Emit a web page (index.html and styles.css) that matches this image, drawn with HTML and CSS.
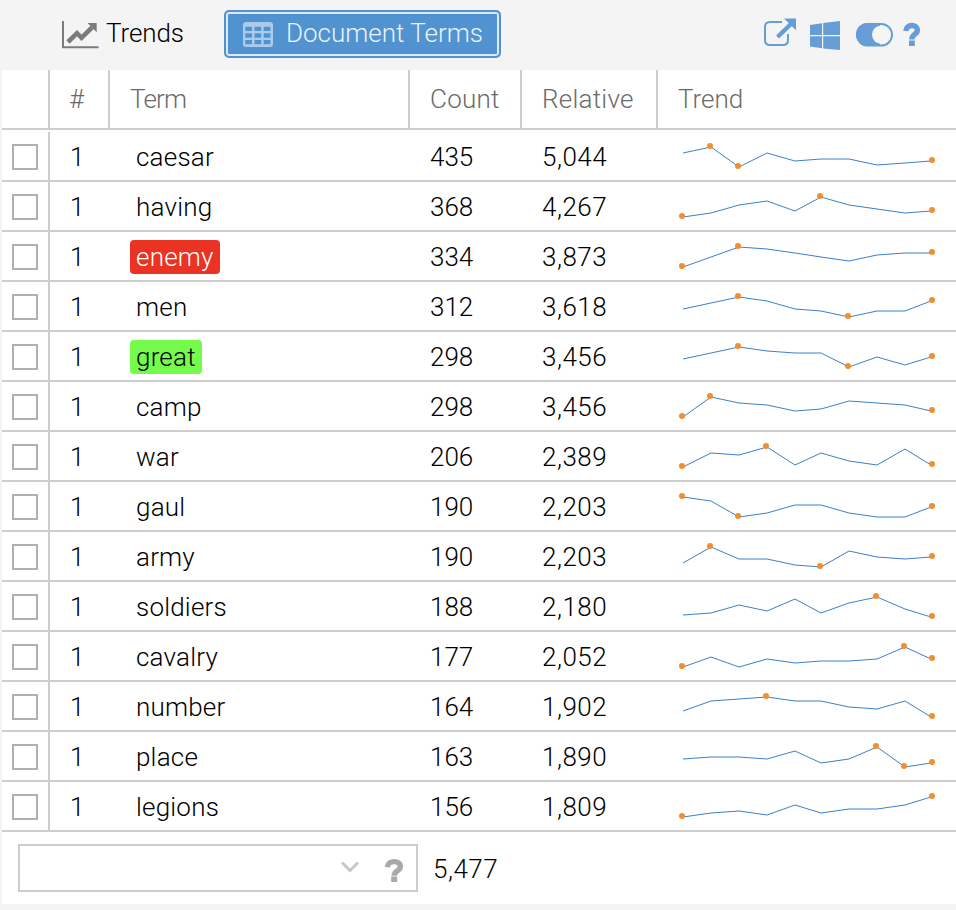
FILE: index.html
```html
<!DOCTYPE html>
<html lang="en">
<head>
<meta charset="utf-8">
<title>Document Terms</title>
<link rel="stylesheet" href="styles.css">
</head>
<body>
<div class="panel">
  <header class="toolbar">
    <div class="tab">
      <svg class="tab-icon" width="38" height="30" viewBox="61 20 38 30">
        <path d="M63 21V47.2H98.500" fill="none" stroke="#7b7b7b" stroke-width="2"/>
        <path d="M68 42L77 33.200L81.500 37.800L92 27.500" fill="none" stroke="#7b7b7b" stroke-width="4.600"/>
        <path d="M87.500 23H96.700V32.200Z" fill="#7b7b7b"/>
      </svg>
      <span class="tab-label trends">Trends</span>
    </div>
    <div class="tab active">
      <svg class="table-icon" width="30" height="25" viewBox="0 0 30 25">
        <rect width="30" height="25" rx="3" fill="#abcbe9"/>
        <g fill="#5192d1">
          <rect x="2.300" y="4.800" width="6.700" height="4.200"/><rect x="11.500" y="4.800" width="6.700" height="4.200"/><rect x="20.700" y="4.800" width="6.700" height="4.200"/>
          <rect x="2.300" y="11.300" width="6.700" height="4.400"/><rect x="11.500" y="11.300" width="6.700" height="4.400"/><rect x="20.700" y="11.300" width="6.700" height="4.400"/>
          <rect x="2.300" y="18" width="6.700" height="4.200"/><rect x="11.500" y="18" width="6.700" height="4.200"/><rect x="20.700" y="18" width="6.700" height="4.200"/>
        </g>
      </svg>
      <span class="tab-label terms">Document Terms</span>
    </div>
    <svg class="tools" width="160" height="36" viewBox="762 16 160 36">
      <g fill="none" stroke="#669dd6">
        <path d="M782 22H770Q765 22 765 27V40Q765 45 770 45H783Q788 45 788 40V34" stroke-width="2"/>
        <path d="M777.500 37L792 23" stroke-width="4.400"/>
        <path d="M905.800 31C906.500 23.500 917.400 24 917.400 30.200C917.400 34.500 911.800 34 911.800 39.500" stroke-width="5.400"/>
        <rect x="857" y="24" width="35" height="21.600" rx="10.800" stroke-width="2"/>
      </g>
      <g fill="#669dd6">
        <path d="M784 18.500H796V30.200Z"/>
        <path d="M810 25L822 23.300V35H810ZM823.200 23.100L840 21V35H823.200ZM810 36.300H822V48.300L810 46.600ZM823.200 36.300H840V50L823.200 48.500Z"/>
        <path d="M867.500 23A11.500 11.500 0 0 0 867.500 46H880V23Z"/>
        <rect x="909" y="40.500" width="5.800" height="5.500"/>
      </g>
      <circle cx="881.300" cy="34.700" r="9.300" fill="#f5f5f5"/>
    </svg>
  </header>
  <div class="grid-head">
    <div></div><div class="num">#</div><div class="name">Term</div><div class="wide">Count</div><div class="wide">Relative</div><div>Trend</div>
  </div>
  <div class="grid-body" id="rows"></div>
  <footer class="footer">
    <div class="search">
      <svg width="60" height="30" viewBox="340 854 60 30" class="search-icons">
        <path d="M342 862.500L350 870.500L358 862.500" fill="none" stroke="#c6c6c6" stroke-width="3"/>
        <path d="M387.300 867.200C388 859.700 400.400 860 400.400 866.500C400.400 871 394.200 870.500 394.200 875.700" fill="none" stroke="#aaa" stroke-width="5.400"/>
        <rect x="391.200" y="876.500" width="6" height="5.500" fill="#aaa"/>
      </svg>
    </div>
    <span class="total">5,477</span>
  </footer>
</div>
<script src="rows.js"></script>
</body>
</html>
```
FILE: styles.css
```css
* { box-sizing: border-box; }
body {
  margin: 0;
  background: #f4f4f4;
  font-family: Roboto, "Liberation Sans", sans-serif;
  font-weight: 300;
  font-size: 26px;
  line-height: 30px;
  color: #000;
}
.panel { height: 910px; padding-left: 2px; overflow: hidden; }
.toolbar { height: 70px; display: flex; align-items: flex-start; padding-top: 10px; }
.tab { height: 48px; display: flex; align-items: center; width: 163px; margin-left: 59px; flex: none; }
.tab-icon { display: block; margin-bottom: -2px; }
.tab-label { white-space: nowrap; margin-top: -2px; }
.trends { margin-left: 7px; letter-spacing: -0.1px; }
.tab.active {
  width: 277px;
  margin-left: 0;
  padding-left: 15px;
  border: 2px solid #5192d1;
  border-radius: 5px;
  background: #5192d1;
  color: #fff;
  box-shadow: inset 0 0 0 2px #dce9f6;
}
.table-icon { margin-left: 2px; }
.terms { margin-left: 13px; color: #e9f2fa; }
.tools { margin: 6px 34px 0 auto; flex: none; }
.grid-head, .row {
  display: grid;
  grid-template-columns: 48px 60px 300px 112px 136px 1fr;
}
.grid-head { height: 60px; background: #fff; border-bottom: 2px solid #cdcdcd; color: #6b6b6b; }
.grid-head > div { padding: 14px 0 0 20px; border-right: 2px solid #cdcdcd; }
.grid-head > div:last-child { border-right: 0; }
.grid-head .num { padding-left: 19px; }
.grid-head .name { letter-spacing: -0.8px; }
.grid-head .wide { letter-spacing: 0.25px; }
.grid-body { padding-top: 2px; background: #fff; }
.row { height: 50px; border-bottom: 2px solid #cdcdcd; }
.row > div { padding: 10px 0 0 20px; }
.row .pick { padding: 12px 0 0 10px; border-right: 2px solid #cdcdcd; }
.box { display: block; width: 26px; height: 26px; border: 2px solid #b0b0b0; }
.row .term { padding-top: 8px; letter-spacing: 0.2px; }
.row .rel { letter-spacing: 0.5px; }
.tag { display: inline-block; height: 34px; line-height: 34px; padding: 0 6px; border-radius: 4px; }
.red { background: #ea3323; color: #fff; }
.green { background: #75fb4c; }
.row .trend { padding: 0 0 0 16px; }
.spark { display: block; fill: none; stroke: #3b80ca; stroke-width: 1; }
.spark circle { fill: #f28e2f; stroke: none; }
.footer { height: 72px; background: #fff; display: flex; padding: 12px 0 0 16px; }
.search { width: 400px; height: 48px; border: 2px solid #cdcdcd; display: flex; justify-content: flex-end; padding: 8px 16px 0 0; }
.search-icons { overflow: visible; }
.total { margin: 10px 0 0 15px; letter-spacing: 0.5px; }
```
FILE: rows.js
```js
// term, count, relative, trend heights, marked points, highlight
const terms = [
  ["caesar", "435", "5,044", [23,17,37,23,31,29,29,35,33,31], [1,2,9]],
  ["having", "368", "4,267", [37,33,25,21,31,17,25,29,33,31], [0,5,9]],
  ["enemy", "334", "3,873", [37,27,17,19,23,27,31,25,23,23], [0,2,9], "red"],
  ["men", "312", "3,618", [29,23,17,21,29,31,37,31,31,21], [2,6,9]],
  ["great", "298", "3,456", [29,23,17,21,23,23,37,27,35,27], [2,6,9], "green"],
  ["camp", "298", "3,456", [37,17,23,25,31,29,21,23,25,31], [0,1,9]],
  ["war", "206", "2,389", [37,23,25,17,35,23,31,35,19,35], [0,3,9]],
  ["gaul", "190", "2,203", [17,21,37,33,25,25,33,37,37,27], [0,2,9]],
  ["army", "190", "2,203", [33,17,29,29,35,37,21,27,29,27], [1,5,9]],
  ["soldiers", "188", "2,180", [35,33,25,31,19,33,23,17,29,37], [7,9]],
  ["cavalry", "177", "2,052", [37,27,37,29,33,31,31,29,17,29], [0,8,9]],
  ["number", "164", "1,902", [31,21,19,17,21,21,27,29,21,37], [3,9]],
  ["place", "163", "1,890", [29,27,27,29,21,33,29,17,37,33], [7,8,9]],
  ["legions", "156", "1,809", [37,33,31,35,25,33,29,29,25,17], [0,9]]
];
const lineX = [9, 37, 65, 93, 121, 147, 175, 203, 231, 257];
const dotX = [8, 36, 64, 92, 120, 146, 174, 202, 230, 258];

document.getElementById("rows").innerHTML = terms.map(([term, count, rel, ys, dots, mark]) => `
  <div class="row">
    <div class="pick"><span class="box"></span></div>
    <div>1</div>
    <div class="term"><span class="tag ${mark || ""}">${term}</span></div>
    <div>${count}</div>
    <div class="rel">${rel}</div>
    <div class="trend"><svg class="spark" width="270" height="46" viewBox="0 2 270 46">
      <polyline points="${ys.map((y, i) => lineX[i] + "," + y).join(" ")}"/>
      ${dots.map(i => `<circle cx="${dotX[i]}" cy="${ys[i] - 1}" r="3"/>`).join("")}
    </svg></div>
  </div>`).join("");
```
